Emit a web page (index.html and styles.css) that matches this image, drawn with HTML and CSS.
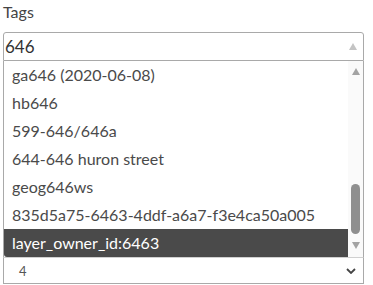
FILE: index.html
```html
<!DOCTYPE html>
<html>
<head>
  <meta charset='UTF-8'>
  <title>Tags</title>
  <link rel="stylesheet" href="styles.css">
</head>
<body>
  <div class='field'>
    <label class='field-label'>Tags</label>
    <div class='combo'>
      <div class='combo-input'>
        <span class='combo-value'>646</span>
        <span class='combo-arrow'></span>
      </div>
      <div class='combo-list'>
        <ul class='options'>
          <li>ga646 (2020-06-08)</li>
          <li>hb646</li>
          <li>599-646/646a</li>
          <li>644-646 huron street</li>
          <li>geog646ws</li>
          <li>835d5a75-6463-4ddf-a6a7-f3e4ca50a005</li>
          <li class='selected'>layer_owner_id:6463</li>
        </ul>
        <div class='scrollbar'>
          <span class='sb-up'></span>
          <span class='sb-track'><span class='sb-thumb'></span></span>
          <span class='sb-down'></span>
        </div>
      </div>
    </div>
    <div class='select'>
      <span class='select-value'>4</span>
      <svg class='chevron' width='10' height='6' viewBox='0 0 10 6'><path d='M1 1 L5 5 L9 1' fill='none' stroke='#444' stroke-width='1.8'/></svg>
    </div>
  </div>
</body>
</html>
```

FILE: styles.css
```css
* { margin: 0; padding: 0; box-sizing: border-box; }
body { font-family: Lato, "Open Sans", sans-serif; background: #fff; color: #4a4a4a; }
.field { width: 361px; margin-left: 3px; padding-top: 3px; }
.field-label { display: block; font-size: 16px; line-height: 18px; margin-bottom: 11px; color: #444; }

.combo-input { height: 29px; border: 1px solid #a9a9a9; border-radius: 3px 3px 0 0; display: flex; align-items: center; padding-left: 1px; padding-right: 6px; }
.combo-value { flex: 1; font-size: 17px; color: #333; }
.combo-arrow { width: 0; height: 0; border-left: 4px solid transparent; border-right: 4px solid transparent; border-bottom: 7px solid #c4c4c4; }

.combo-list { height: 196px; border-left: 1px solid #a9a9a9; border-right: 1px solid #a9a9a9; display: flex; }
.options { list-style: none; flex: 1; }
.options li { height: 28px; line-height: 28px; padding-left: 8px; font-size: 16px; white-space: nowrap; }
.options li.selected { background: #4a4a4a; color: #fff; border-radius: 0 0 0 3px; }

.scrollbar { width: 15px; background: #fafafa; display: flex; flex-direction: column; align-items: center; padding: 7px 0 8px; }
.sb-up, .sb-down { width: 0; height: 0; border-left: 4px solid transparent; border-right: 4px solid transparent; }
.sb-up { border-bottom: 7px solid #a3a3a3; }
.sb-down { border-top: 7px solid #a3a3a3; }
.sb-track { flex: 1; width: 9px; display: flex; flex-direction: column; justify-content: flex-end; padding: 0 0 8px; }
.sb-thumb { height: 50px; background: #8f8f8f; border-radius: 5px; }

.select { height: 27px; border: 1px solid #a9a9a9; border-top: 1px solid #d0d0d0; display: flex; align-items: center; padding-left: 15px; padding-right: 7px; }
.select-value { flex: 1; font-size: 13px; color: #555; }
```
